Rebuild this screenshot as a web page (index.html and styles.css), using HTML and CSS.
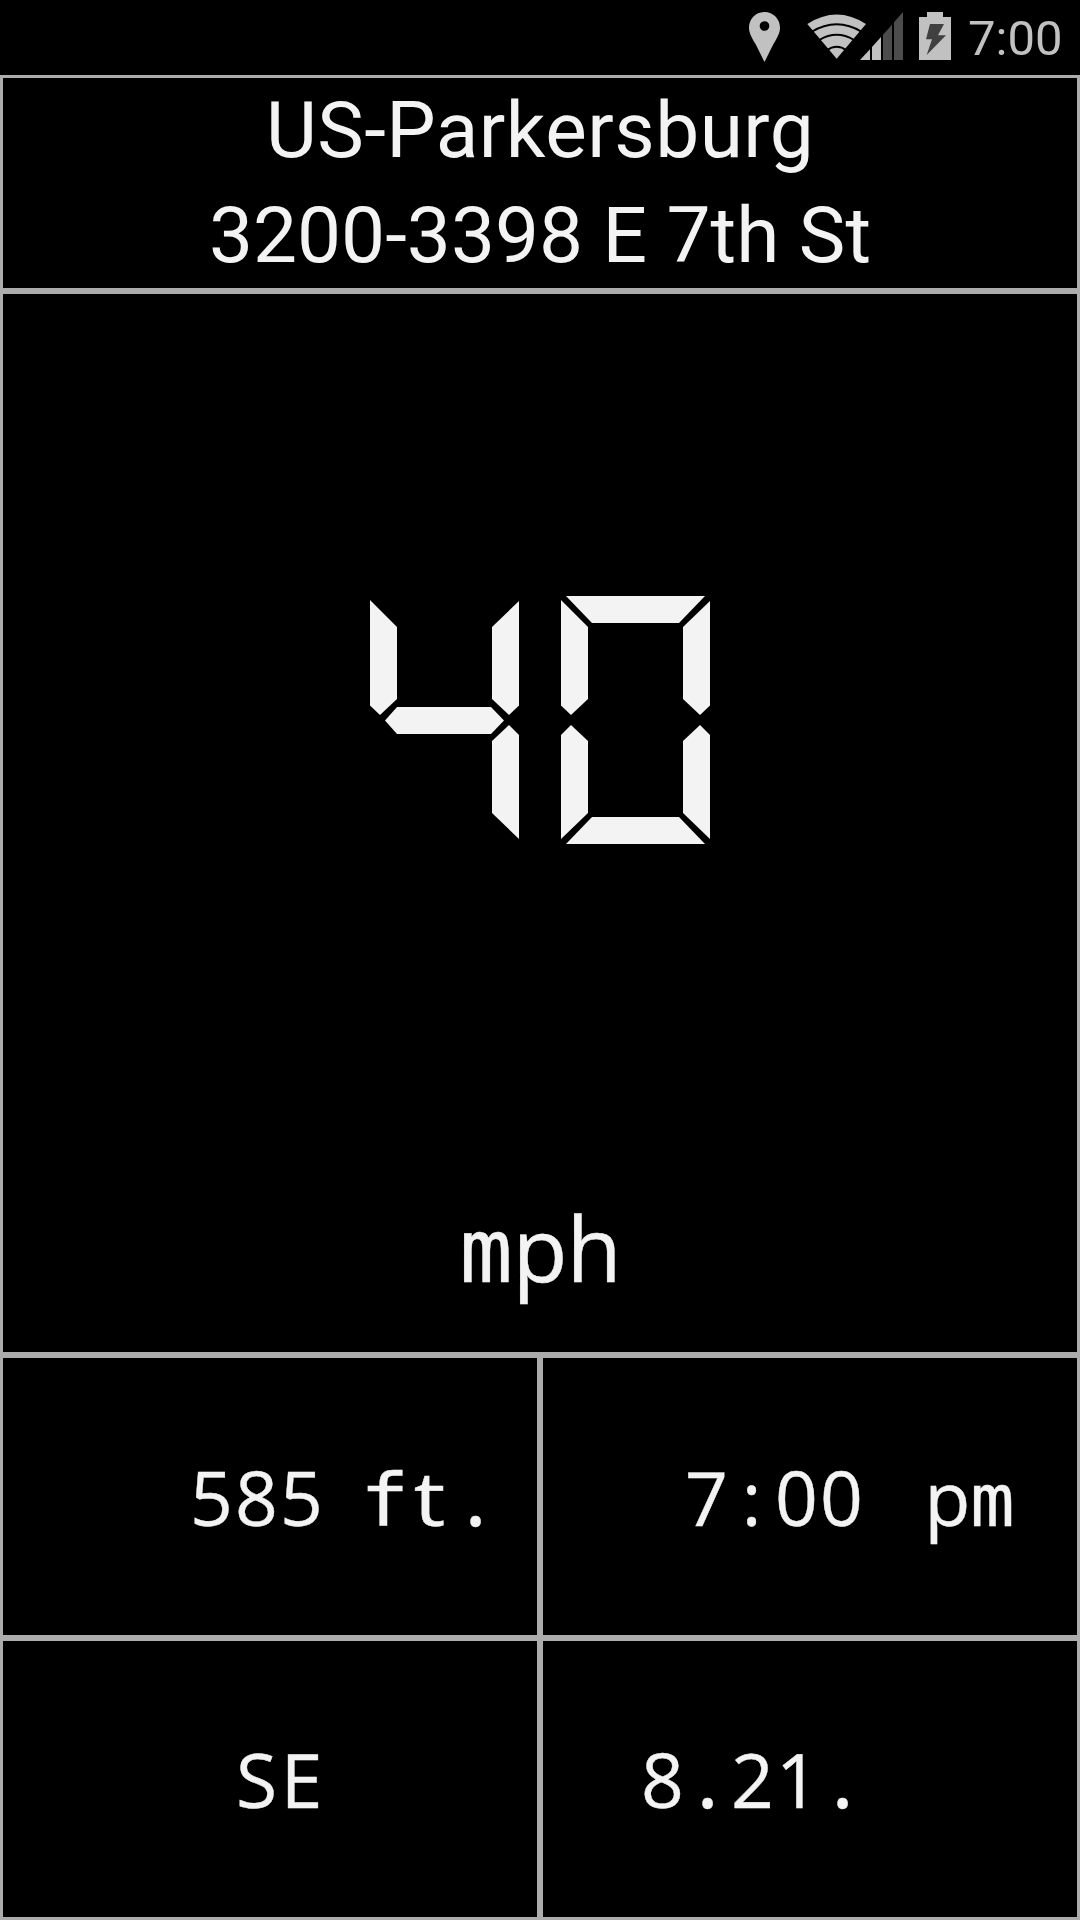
FILE: index.html
```html
<!DOCTYPE html>
<html lang="en">
<head>
<meta charset="utf-8">
<title>Speedometer</title>
<link rel="stylesheet" href="styles.css">
</head>
<body>
<header class="status">
  <svg class="pin" viewBox="57 36 96 150"><path fill="#c1c1c1" fill-rule="evenodd" d="M103.500 36C77 36 57 57 57 83C57 101 67 115 77 133L103.500 186L130 133C140 115 150 101 150 83C150 57 130 36 103.500 36ZM103.500 63.500A14.500 14.500 0 1 1 103.500 92.500A14.500 14.500 0 1 1 103.500 63.500Z"/></svg>
  <svg class="wifi" viewBox="231 42 180 135">
    <path fill="#c1c1c1" d="M232 72Q320 15 408 72L320 176Z"/>
    <path fill="none" stroke="#000" stroke-width="6" d="M244 96Q320 50 396 96M268 120Q320 89 372 120M290 151Q320 129 350 151"/>
  </svg>
  <svg class="signal" viewBox="390 36 129 144">
    <path fill="#c1c1c1" d="M390 180L420 148V180ZM426 141L453 111V180H426Z"/>
    <path fill="#4c4c4c" d="M459 104L486 74V180H459ZM492 67L519 36V180H492Z"/>
  </svg>
  <svg class="battery" viewBox="567 36 96 144">
    <path fill="#c1c1c1" d="M591 36H639V51H663V180H567V51H591Z"/>
    <path fill="#404040" d="M600 72H642L624 106H648L590 165L606 118H588Z"/>
  </svg>
  <span class="clock">7:00</span>
</header>
<main class="dash">
  <section class="panel place"><div class="city">US-Parkersburg</div><div>3200-3398 E 7th St</div></section>
  <section class="panel speed">
    <div class="digits" role="img" aria-label="40">
      <div class="digit"><i class="seg f"></i><i class="seg b"></i><i class="seg g"></i><i class="seg c"></i></div>
      <div class="digit"><i class="seg a"></i><i class="seg f"></i><i class="seg b"></i><i class="seg e"></i><i class="seg c"></i><i class="seg d"></i></div>
    </div>
    <div class="unit mono"><span class="alt">m</span><span>p</span><span>h</span></div>
  </section>
  <section class="panel reading altitude mono"><span>5</span><span>8</span><span>5</span><span class="gap"> </span><span class="alt eff">f</span><span class="tee">t</span><span class="dot">.</span></section>
  <section class="panel reading time mono"><span>7</span><span>:</span><span>0</span><span>0</span><div class="half"><span>p</span><span class="alt">m</span></div></section>
  <section class="panel reading heading mono"><span>S</span><span>E</span></section>
  <section class="panel reading date mono"><span>8</span><span class="dot">.</span><span>2</span><span>1</span><span class="dot">.</span></section>
</main>
</body>
</html>
```
FILE: styles.css
```css
* { box-sizing: border-box; }
body {
  margin: 0;
  width: 1080px;
  height: 1920px;
  background: #000;
  color: #f3f3f3;
  overflow: hidden;
}
.status {
  height: 75px;
  padding: 12px 0 0 749px;
  display: flex;
  align-items: flex-start;
}
.status svg { display: block; flex: none; }
.pin { width: 32px; height: 50px; margin-right: 26px; }
.wifi { width: 60px; height: 45px; margin: 2px -7px 0 0; }
.signal { width: 43px; height: 48px; margin-right: 16px; }
.battery { width: 32px; height: 48px; margin-right: 17px; }
.clock {
  font: 400 49px/54px Roboto, sans-serif;
  color: #c1c1c1;
}
.dash {
  display: grid;
  grid-template-columns: 1fr 1fr;
  grid-template-rows: 216px 1064px 283px 282px;
}
.panel { border: 3px solid #acacac; }
.place {
  grid-column: span 2;
  font: 400 78.400px/105px Roboto, sans-serif;
  text-align: center;
}
.city { letter-spacing: 0.450px; }
.speed {
  grid-column: span 2;
  display: flex;
  flex-direction: column;
  align-items: center;
  justify-content: space-between;
  padding: 302px 0 39px;
}
.digits { display: flex; gap: 42px; }
.digit {
  display: grid;
  width: 149px;
  height: 248px;
}
.seg { grid-area: 1 / 1; background: #f3f3f3; }
.a { clip-path: polygon(5px 0, 144px 0, 118px 27px, 31px 27px); }
.b { clip-path: polygon(149px 5px, 149px 109.500px, 139px 119px, 122px 103px, 122px 31px); }
.c { clip-path: polygon(139px 129px, 149px 139px, 149px 243px, 122px 217px, 122px 145px); }
.d { clip-path: polygon(31px 221px, 118px 221px, 144px 248px, 5px 248px); }
.e { clip-path: polygon(10px 129px, 27px 145px, 27px 217px, 0 243px, 0 139px); }
.f { clip-path: polygon(0 4px, 27px 31px, 27px 103px, 10px 119px, 0 109.500px); }
.g { clip-path: polygon(15px 124.500px, 27px 111px, 121px 111px, 134px 124.500px, 121px 138px, 27px 138px); }
.mono {
  font-family: "Open Sans", sans-serif;
  -webkit-text-stroke: 0.400px #f3f3f3;
  display: flex;
  align-items: baseline;
}
/* each character sits in a fixed-pitch cell */
.mono span {
  width: 45px;
  display: flex;
  justify-content: center;
  white-space: pre;
}
.mono .alt { font-family: "DejaVu Sans Mono", monospace; font-size: 0.980em; }
.mono .eff { transform: translateX(-1px) scaleX(1.100); }
.mono .tee { transform: translateX(-1px) scaleX(1.180); }
.mono .gap { width: 39px; }
.mono .dot { transform: scale(1.150); transform-origin: 50% 60.600%; }
.mono.unit span { width: 54px; }
.unit { font-size: 90px; line-height: 122px; }
.reading { font-size: 75px; line-height: 276px; }
.altitude { padding-left: 186px; line-height: 279px; }
.time { padding-left: 141px; line-height: 279px; }
.half { display: flex; align-items: baseline; margin-left: 61px; }
.heading { padding-left: 231px; }
.date { padding-left: 97px; }
```
